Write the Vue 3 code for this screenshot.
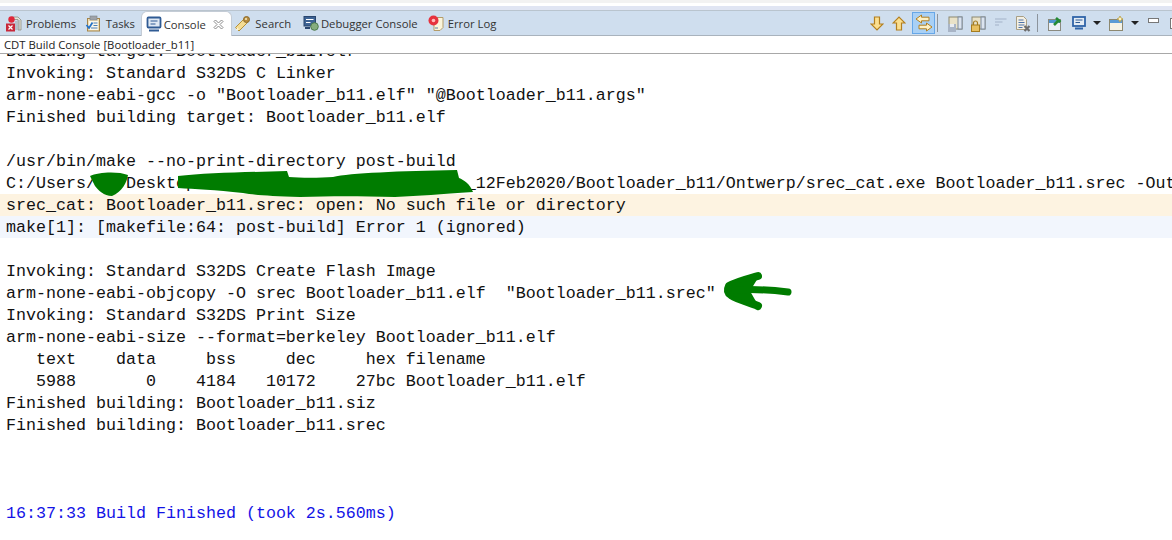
<script setup>
const lines = [
  { t: 'Building target: Bootloader_b11.elf' },
  { t: 'Invoking: Standard S32DS C Linker' },
  { t: 'arm-none-eabi-gcc -o "Bootloader_b11.elf" "@Bootloader_b11.args"' },
  { t: 'Finished building target: Bootloader_b11.elf' },
  { t: ' ' },
  { t: '/usr/bin/make --no-print-directory post-build' },
  { t: 'C:/Users/   Desktop                           _12Feb2020/Bootloader_b11/Ontwerp/srec_cat.exe Bootloader_b11.srec -Out' },
  { t: 'srec_cat: Bootloader_b11.srec: open: No such file or directory', c: 'err' },
  { t: 'make[1]: [makefile:64: post-build] Error 1 (ignored)', c: 'warn' },
  { t: ' ' },
  { t: 'Invoking: Standard S32DS Create Flash Image' },
  { t: 'arm-none-eabi-objcopy -O srec Bootloader_b11.elf  "Bootloader_b11.srec"' },
  { t: 'Invoking: Standard S32DS Print Size' },
  { t: 'arm-none-eabi-size --format=berkeley Bootloader_b11.elf' },
  { t: '   text    data     bss     dec     hex filename' },
  { t: '   5988       0    4184   10172    27bc Bootloader_b11.elf' },
  { t: 'Finished building: Bootloader_b11.siz' },
  { t: 'Finished building: Bootloader_b11.srec' },
  { t: ' ' },
  { t: ' ' },
  { t: ' ' },
  { t: '16:37:33 Build Finished (took 2s.560ms)', c: 'done' },
]
</script>

<template>
  <div class="page">
    <div class="topgap"></div>
    <div class="tabbar">
      <div class="tab first">
        <svg width="17" height="17" viewBox="0 0 17 17"><path d="M7 2h6l3 3v10h-3V4.500H7z" fill="#e4e4da" stroke="#8d8d80" stroke-width=".8"/><path d="M11 6v9M14 5v10" stroke="#9aa0a6"/><circle cx="6.500" cy="4.500" r="3.200" fill="#e0283a"/><rect x="1" y="8.500" width="9" height="8" fill="#c8283a"/><path d="M3.500 10.500l4 4M7.500 10.500l-4 4" stroke="#fff" stroke-width="1.200"/></svg>
        <span>Problems</span>
      </div>
      <div class="tab">
        <svg width="17" height="17" viewBox="0 0 17 17"><rect x="2.500" y="3.500" width="12" height="12.500" fill="#efdfb6" stroke="#a5854a"/><rect x="5" y="1" width="7" height="4" fill="#9fa3a8" stroke="#7c8288" stroke-width=".6"/><rect x="4" y="6" width="9" height="9" fill="#fbf7ea"/><path d="M1.500 10l2.500 3 3.500-5.500" stroke="#2472c8" stroke-width="1.800" fill="none"/><path d="M8.500 8h4M8.500 10.500h4M6 13h6.500" stroke="#4b7fb8"/></svg>
        <span>Tasks</span>
      </div>
      <div class="tab active">
        <svg width="16" height="16" viewBox="0 0 16 16"><rect x="1.500" y="1.500" width="13" height="10" rx="1" fill="#dfe9f4" stroke="#2f5b94" stroke-width="1.800"/><path d="M4.500 5h7M4.500 8h5" stroke="#2f5b94" stroke-width="1.200"/><path d="M3 14.500h10" stroke="#2f5b94" stroke-width="2"/></svg>
        <span>Console</span>
        <svg class="close" width="11" height="11" viewBox="0 0 11 11"><path d="M1 2.500L2.500 1 5.500 4 8.500 1 10 2.500 7 5.500 10 8.500 8.500 10 5.500 7 2.500 10 1 8.500 4 5.500z" fill="#fff" stroke="#8a8a8a"/></svg>
      </div>
      <div class="tab search">
        <svg width="17" height="17" viewBox="0 0 17 17"><path d="M1.500 12.500L10 4l3.500 3.500L5 16z" fill="#f4dc94" stroke="#b59238"/><path d="M1.500 15.500l2-3 1.500 2z" fill="#fff8dc"/><circle cx="12.500" cy="4.500" r="3" fill="#b98d3f" stroke="#8a6a2c"/><circle cx="12" cy="4" r="1" fill="#f7ecc4"/></svg>
        <span>Search</span>
      </div>
      <div class="tab debug">
        <svg width="16" height="16" viewBox="0 0 16 16"><rect x="1" y="1.500" width="11.500" height="9.500" fill="#3d6394" stroke="#29466f"/><path d="M3 4.500h7.500M3 7.500h4.500" stroke="#fff"/><path d="M2 13h5" stroke="#29466f" stroke-width="2"/><circle cx="11.500" cy="11.500" r="3.800" fill="#86ad7e" stroke="#4c7a4c"/></svg>
        <span>Debugger Console</span>
      </div>
      <div class="tab">
        <svg width="16" height="16" viewBox="0 0 16 16"><path d="M6 2.500h9v10l-3 3H6z" fill="#fbf5dc" stroke="#b39c6a"/><path d="M7 13h3" stroke="#5b7fa8"/><circle cx="5.500" cy="5.500" r="5" fill="#e6323e"/><circle cx="5.500" cy="5.500" r="1.800" fill="#fbb"/></svg>
        <span>Error Log</span>
      </div>
      <div class="tools">
        <svg class="t1" width="14" height="15" viewBox="0 0 14 15"><path d="M4.500 1h5v7h3.500L7 14 1 8h3.500z" fill="#fbdf8f" stroke="#b37f1f" stroke-width="1.200"/></svg>
        <svg class="t2" width="14" height="15" viewBox="0 0 14 15"><path d="M4.500 14h5V7h3.500L7 1 1 7h3.500z" fill="#fbdf8f" stroke="#b37f1f" stroke-width="1.200"/></svg>
        <div class="toggled"><svg width="18" height="18" viewBox="0 0 18 18"><path d="M6.500 1L1 5l5.500 4V6.800H14V3.200H6.500zM11.500 9l5.500 4-5.500 4v-2.200H4v-3.600h7.500z" fill="#fdf0c4" stroke="#b37f1f"/></svg></div>
        <span class="sep"></span>
        <svg class="t3" width="15" height="16" viewBox="0 0 15 16"><rect x="1" y="1" width="13" height="12" fill="#e9e2c8" stroke="#8c8870"/><rect x="10" y="1" width="4" height="12" fill="#dce4ee" stroke="#7d8a9c"/><rect x="0" y="8" width="8" height="8" fill="#a8b4c6"/><rect x="2" y="8" width="4" height="3" fill="#e8ecf2"/></svg>
        <svg class="t4" width="15" height="16" viewBox="0 0 15 16"><rect x="1" y="1" width="13" height="12" fill="#e9e2c8" stroke="#8c8870"/><rect x="10" y="1" width="4" height="12" fill="#dce4ee" stroke="#7d8a9c"/><rect x="0.500" y="9" width="8" height="6.500" fill="#e8c060" stroke="#a47c20"/><path d="M2.500 9V7a2 2 0 014 0v2" fill="none" stroke="#a47c20" stroke-width="1.200"/></svg>
        <svg class="t5" width="12" height="8" viewBox="0 0 12 8"><path d="M0 1h11.500M0 4h7.500M0 7h4" stroke="#a3b2c8" stroke-width="1.200"/></svg>
        <svg class="t6" width="15" height="16" viewBox="0 0 15 16"><path d="M.5.500h7l3 3v10H.5z" fill="#f4f0e4" stroke="#a89f85"/><path d="M2.500 4h5M2.500 6.500h6M2.500 9h6M2.500 11.500h4" stroke="#4d73a8"/><path d="M8.500 10l5 5M13.500 10l-5 5" stroke="#6e6e6e" stroke-width="2.200"/></svg>
        <span class="sep s2"></span>
        <svg class="t7" width="14" height="15" viewBox="0 0 14 15"><rect x=".5" y="3.500" width="12" height="11" fill="#eaf0f6" stroke="#8a8a80"/><rect x="1" y="4" width="11" height="3" fill="#4d94d0"/><path d="M6 9l4-4M8 2l4.500 4" stroke="#238a34" stroke-width="2.600"/></svg>
        <svg class="t8" width="14" height="14" viewBox="0 0 14 14"><rect x="1" y="1" width="12" height="9" fill="#e4ecf4" stroke="#2f64a8" stroke-width="1.800"/><path d="M3.500 4h7M3.500 6.500h4.500" stroke="#2f5b94"/><path d="M3 12.500h8" stroke="#2f64a8" stroke-width="2"/></svg>
        <span class="caret c1"></span>
        <svg class="t9" width="15" height="15" viewBox="0 0 15 15"><rect x=".5" y="3.500" width="13" height="11" fill="#f6f3e6" stroke="#8c8870"/><rect x="1" y="4" width="12" height="3" fill="#5b9bd5"/><path d="M11 0l1 2 2 1-2 1-1 2-1-2-2-1 2-1z" fill="#fdf3c5" stroke="#b89c3e" stroke-width=".8"/></svg>
        <span class="caret c2"></span>
        <span class="min"></span>
        <span class="max"></span>
      </div>
    </div>
    <div class="title">CDT Build Console [Bootloader_b11]</div>
    <div class="console">
      <div class="lines">
        <div v-for="(l, i) in lines" :key="i" class="line" :class="l.c">{{ l.t }}</div>
      </div>
      <svg class="scrib" width="400" height="40" viewBox="86 160 400 40">
        <path d="M90 176C98 172 118 171 128 175 127 182 122 192 112 196 104 196 98 190 95 186ZM178 176C205 173 250 172 287 171L289 177C300 178 320 178 333 177 350 173 400 171 457 170L459 178C464 180 470 184 473 192 440 194 420 196 395 197 360 196 330 196 300 197 270 196 255 195 243 193 215 190 195 189 178 188Z" fill="#007c00"/>
      </svg>
      <svg class="arrow" width="80" height="50" viewBox="720 265 80 50">
        <path d="M758 276C748 279 738 281 729 286 727 290 728 293 731 295 739 300 749 302 758 306" fill="none" stroke="#007c00" stroke-width="8" stroke-linecap="round" stroke-linejoin="round"/>
        <path d="M729 286L758 278 750 291 758 305 731 295Z" fill="#007c00"/>
        <path d="M735 290C755 289 772 290 788 292" fill="none" stroke="#007c00" stroke-width="7" stroke-linecap="round"/>
      </svg>
    </div>
  </div>
</template>

<style>
html, body { margin: 0; background: #fff; overflow: hidden; }
</style>

<style scoped>
.page { width: 1172px; height: 540px; overflow: hidden; background: #fff; display: flex; flex-direction: column; }
.topgap { height: 10px; background: linear-gradient(#f2f2f2 0 3px, #fff 3px 6px, #e0e5f3 6px); flex: none; }
.tabbar { height: 24px; flex: none; display: flex; align-items: center; background: #cfdeee; border-top: 1px solid #b9c4ce; border-bottom: 1px solid #a9b3bd; font: 11.3px "Open Sans", "Liberation Sans", sans-serif; color: #333; }
.tab { display: flex; align-items: center; gap: 4px; height: 24px; padding: 0 4.25px; white-space: nowrap; }
.first { padding-left: 5px; }
.tab.active { background: #fff; border-radius: 6px 6px 0 0; border: 1px solid #c4ccd6; border-bottom: 0; padding: 0 7px 0 4px; box-sizing: border-box; height: 25px; margin: 0 0 0 1.5px; align-self: flex-start; gap: 2px; }
.search { padding: 0 7.5px 0 2.5px; }
.debug { gap: 2px; padding-right: 5.75px; }
.close { margin-left: 5px; }
.tools { margin-left: auto; position: relative; width: 310px; height: 24px; }
.tools > * { position: absolute; }
.t1 { left: 8px; top: 5px; }
.t2 { left: 30px; top: 5px; }
.toggled { left: 50px; top: 1px; width: 21px; height: 20px; background: #a9d0f5; border: 1px solid #66a7e8; display: flex; align-items: center; justify-content: center; }
.sep { left: 75px; top: 3px; width: 1px; height: 18px; background: #8c949c; }
.s2 { left: 175px; }
.t3 { left: 86px; top: 5px; } .t4 { left: 109px; top: 5px; } .t5 { left: 133px; top: 7px; } .t6 { left: 154px; top: 5px; } .t7 { left: 186px; top: 5px; } .t8 { left: 210px; top: 5px; } .t9 { left: 247px; top: 5px; }
.caret { width: 0; height: 0; border-left: 4px solid transparent; border-right: 4px solid transparent; border-top: 4px solid #222; top: 10px; }
.c1 { left: 231px; } .c2 { left: 269px; }
.min { left: 286px; top: 7px; width: 9px; height: 3px; background: #fff; border: 1px solid #777; }
.max { left: 308px; top: 7px; width: 9px; height: 9px; background: #fff; border: 1px solid #777; }
.title { height: 17px; flex: none; padding-left: 4px; font: 11.3px/18px "Open Sans", "Liberation Sans", sans-serif; color: #222; border-bottom: 1px solid #a8a8a8; }
.console { position: relative; flex: 1; overflow: hidden; font: 16.67px/22px "Liberation Mono", monospace; color: #111; }
.lines { margin-top: -14px; }
.line { height: 22px; box-sizing: border-box; padding: 1px 0 0 6px; white-space: pre; }
.err { background: #fdf3e1; }
.warn { background: #f2f6fd; }
.done { color: #1414e6; }
.scrib { position: absolute; left: 86px; top: 106px; }
.arrow { position: absolute; left: 720px; top: 211px; }
</style>
